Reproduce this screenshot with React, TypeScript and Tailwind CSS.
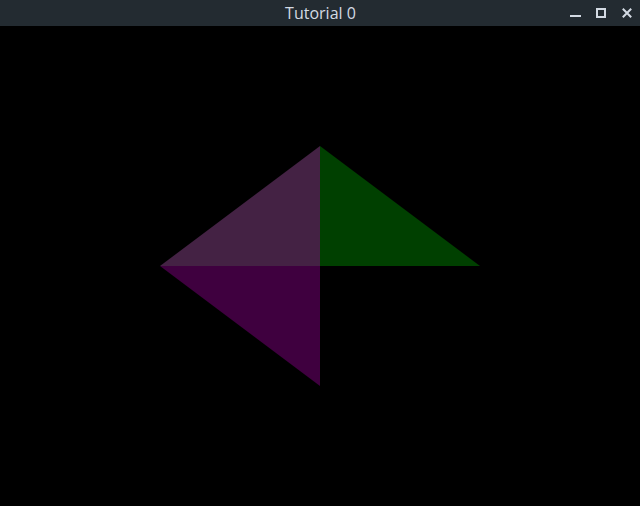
export default function App() {
  return (
    <div className="w-[640px] h-[506px] flex flex-col bg-black overflow-hidden">
      <div className="h-[26px] bg-[#232b31] flex items-center relative shrink-0">
        <div
          className="flex-1 text-center text-[16px] font-medium text-[#d3dae3] leading-none pl-[1px]"
          style={{ fontFamily: '"Open Sans", "Noto Sans", sans-serif' }}
        >
          Tutorial 0
        </div>
        <div className="absolute right-[8px] top-0 h-[26px] flex items-center">
          <svg width="11" height="10" viewBox="0 0 11 10">
            <rect x="0" y="7" width="11" height="2" fill="#d3dae3" />
          </svg>
          <svg width="10" height="10" viewBox="0 0 10 10" className="ml-[15px]">
            <rect x="1" y="1" width="8" height="8" fill="none" stroke="#d3dae3" strokeWidth="2" />
          </svg>
          <svg width="10" height="10" viewBox="0 0 10 10" className="ml-[16px]">
            <path d="M0.8 0.8 L9.2 9.2 M9.2 0.8 L0.8 9.2" stroke="#d3dae3" strokeWidth="2" />
          </svg>
        </div>
      </div>
      <div className="flex-1 bg-black">
        <svg width="640" height="480" viewBox="0 0 640 480">
          <polygon points="160,240 320,120 320,240" fill="#442244" />
          <polygon points="320,120 480,240 320,240" fill="#004000" />
          <polygon points="160,240 320,240 320,360" fill="#3f003f" />
        </svg>
      </div>
    </div>
  );
}
